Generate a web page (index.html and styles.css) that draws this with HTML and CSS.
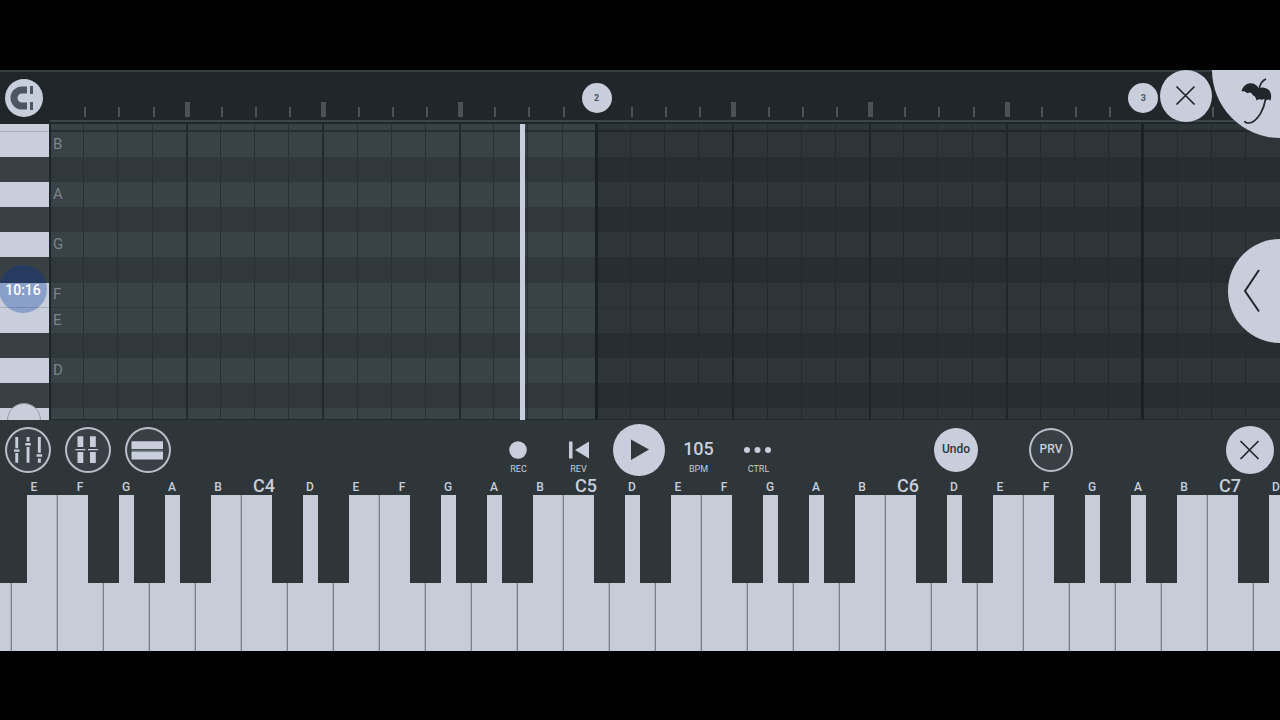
FILE: index.html
```html
<!DOCTYPE html>
<html lang="en">
<head>
    <meta charset="UTF-8">
    <meta name="viewport" content="width=device-width, initial-scale=1.0">
    <title>Piano Roll</title>
    <link rel="stylesheet" href="styles.css">
</head>
<body>
    <main class="app">
        <header class="ruler">
            <div class="ruler-side">
                <button class="magnet" aria-label="Snap">
                    <svg width="38" height="38" viewBox="0 0 38 38">
                        <path d="M22 11H17a8 8 0 0 0 0 16H22" fill="none" stroke="#4c5562" stroke-width="7"/>
                        <path d="M25 7h3v8h-3zM25 23h3v8h-3z" fill="#4c5562"/>
                    </svg>
                </button>
            </div>
            <div class="ticks" id="ticks"></div>
        </header>

        <section class="roll">
            <div class="note-rows" id="side-keys">
                <span class="side-handle"></span>
            </div>
            <div class="notes">
                <div class="note-rows" id="rows"></div>
                <div class="steps" id="steps"></div>
                <div class="playhead"></div>
            </div>
            <div class="clock">10:16</div>
        </section>

        <nav class="controls">
            <div class="group">
                <button class="ring" aria-label="Mixer">
                    <svg width="46" height="46" viewBox="0 0 46 46" fill="#c8cedb">
                        <path d="M10.300 10h2.900v11.300h-2.900zM10.300 26h2.900v9.800h-2.900zM9 22.500h5.500v2.200h-5.500z"/>
                        <path d="M21.600 10h2.900v4.500h-2.900zM21.600 20h2.900v15.800h-2.900zM20.300 16h5.500v2.400h-5.500z"/>
                        <path d="M32.900 10h2.900v15.800h-2.900zM32.900 31.500h2.900v4.300h-2.900zM31.600 27.300h5.500v2.400h-5.500z"/>
                    </svg>
                </button>
                <button class="ring" aria-label="Split view">
                    <svg width="46" height="46" viewBox="0 0 46 46" fill="#c8cedb">
                        <path d="M12.500 9.300h5.800v10.700h-5.800zM12.500 25h5.800v11h-5.800zM25 9.300h5.800v10.700h-5.800zM25 25h5.800v11h-5.800z"/>
                        <path d="M10.300 22h10v1.200h-10zM23 22h10v1.200h-10z"/>
                    </svg>
                </button>
                <button class="ring" aria-label="Stacked view">
                    <svg width="46" height="46" viewBox="0 0 46 46" fill="#c8cedb">
                        <path d="M6.500 14.300h31.500v7.700h-31.500zM6.500 24.500h31.500v8h-31.500z"/>
                        <path d="M6.500 22.800h31.500v.8h-31.500z" fill="#7f8790"/>
                    </svg>
                </button>
            </div>

            <div class="transport">
                <button class="tool">
                    <svg width="30" height="26" viewBox="0 0 30 26"><circle cx="14" cy="13" r="8.800"/></svg>
                    <span>REC</span>
                </button>
                <button class="tool">
                    <svg width="30" height="26" viewBox="0 0 30 26"><path d="M5 4.500h3.500v17H5zM25 4.500v17L11 13z"/></svg>
                    <span>REV</span>
                </button>
                <button class="play" aria-label="Play">
                    <svg width="52" height="52" viewBox="0 0 52 52"><path d="M18 15.500v20.500L36 25.500z" fill="#30383c"/></svg>
                </button>
                <button class="tool">
                    <b>105</b>
                    <span>BPM</span>
                </button>
                <button class="tool">
                    <svg width="30" height="26" viewBox="0 0 30 26"><circle cx="3" cy="13" r="3"/><circle cx="13.500" cy="13" r="3"/><circle cx="24" cy="13" r="3"/></svg>
                    <span>CTRL</span>
                </button>
            </div>

            <div class="group group-right">
                <button class="undo">Undo</button>
                <button class="preview">PRV</button>
                <button class="close-keys" aria-label="Close keyboard">
                    <svg width="48" height="48" viewBox="0 0 48 48"><path d="M14.500 15l18 18M32.500 15l-18 18" stroke="#20262b" stroke-width="1.700"/></svg>
                </button>
            </div>
        </nav>

        <section class="piano" id="piano"></section>

        <button class="close-roll" aria-label="Close editor">
            <svg width="52" height="52" viewBox="0 0 52 52"><path d="M16.500 16.500l18 18M34.500 16.500l-18 18" stroke="#20262b" stroke-width="1.700"/></svg>
        </button>
        <button class="corner" aria-label="Instrument">
            <svg width="68" height="68" viewBox="0 0 68 68">
                <path d="M29.500 21.300C30.500 17 34 13.500 38 13.300C42 13.200 45 15 46.500 18C50 16.800 54.500 17.500 57 20C59.500 23 59.800 27 58.300 31C57.500 29.500 56 29 54.500 30.500C53.500 28.800 51.500 28.500 50 30C48.500 28.800 46.500 29 44.500 30.500C44 27.500 42.500 25.500 40.500 25C39.500 22.500 37.500 22 35.500 23.300C34 21.500 31.500 21 29.500 21.300z" fill="#20262b"/>
                <path d="M54 9C50.500 10.500 48 14 47 19M53.500 29C52 39 47 48 41 51.700C37.500 53.500 33.500 53.500 32.500 51.200" fill="none" stroke="#20262b" stroke-width="1.700"/>
            </svg>
        </button>
        <button class="drawer" aria-label="Open panel">
            <svg width="52" height="104" viewBox="0 0 52 104"><path d="M31 31L17 52l14 20.500" fill="none" stroke="#20262b" stroke-width="2"/></svg>
        </button>
    </main>
    <script src="script.js"></script>
</body>
</html>
```
FILE: styles.css
```css
* {
    margin: 0;
    padding: 0;
    box-sizing: border-box;
    font-family: Roboto, 'Liberation Sans', sans-serif;
}

body {
    background: #000;
    min-height: 100vh;
    padding-top: 70px;
    overflow-x: hidden;
}

button {
    border: none;
    background: none;
    color: #c8cedb;
    cursor: pointer;
}

svg {
    display: block;
}

.app {
    position: relative;
    background: #2e363a;
    overflow: hidden;
}

/* Timeline ruler */
.ruler {
    display: flex;
    height: 54px;
    background: #1f272b;
    border-top: 2px solid #363e42;
}

.ruler-side {
    width: 50px;
    padding: 7px 5px;
}

.magnet {
    width: 38px;
    height: 38px;
    border-radius: 50%;
    background: #c8cedb;
}

.ticks {
    flex: 1;
    display: grid;
    grid-template-columns: repeat(36, 1fr);
    align-items: end;
    height: 50px;
    padding-bottom: 3px;
    border-bottom: 2px solid #3c4549;
}

.tick {
    position: relative;
    height: 10px;
}

.tick::before {
    content: '';
    display: block;
    width: 2px;
    height: 10px;
    background: #4a5255;
}

.tick.beat {
    height: 15px;
}

.tick.beat::before {
    width: 5px;
    height: 15px;
    margin-left: -2px;
}

.tick.bar::before {
    display: none;
}

.bar-number {
    position: absolute;
    left: -15px;
    bottom: 4px;
    width: 30px;
    height: 30px;
    border-radius: 50%;
    background: #c8cedb;
    color: #4c5562;
    font-size: 9px;
    font-weight: 700;
    line-height: 30px;
    text-align: center;
}

/* Note grid */
.roll {
    position: relative;
    display: flex;
    height: 296px;
    background: #394246;
}

.note-rows {
    display: grid;
    grid-template-rows: 8px repeat(11, 1fr) 12px;
    height: 100%;
}

#side-keys {
    position: relative;
    width: 50px;
    border-right: 1px solid #20282c;
    overflow: hidden;
}

.side-key {
    background: #c8cedb;
}

.side-key.black {
    background: #384044;
}

.side-key.split {
    border-bottom: 1px solid #a9afba;
}

.side-handle {
    position: absolute;
    left: 7px;
    bottom: -17px;
    width: 34px;
    height: 34px;
    border: 1px solid #9299a2;
    border-radius: 50%;
    background: #c8cedb;
}

.notes {
    position: relative;
    flex: 1;
}

.row {
    display: flex;
    align-items: center;
    padding-left: 3px;
    padding-bottom: 1px;
    background: #394246;
    color: #7c8486;
    font-size: 15px;
    line-height: 20px;
}

.row.black {
    background: #31383b;
}

.row.split {
    border-bottom: 1px solid #323a3e;
}

.row.octave {
    border-bottom: 2px solid #272f33;
}

.steps {
    position: absolute;
    inset: 0;
    display: grid;
    grid-template-columns: repeat(36, 1fr);
    border-bottom: 1px solid #22292d;
}

.step {
    margin-left: -1px;
    border-left: 1px solid #283034;
}

.step.beat {
    border-left: 2px solid #232a2e;
}

.step.bar:first-child {
    margin-left: 0;
    border-left: 1px solid #1c2327;
}

.step.outside {
    margin-left: 0;
    background: rgba(13, 18, 22, 0.27);
    box-shadow: -1px 0 #232a2e;
    border-left: none;
}

.step.outside.beat {
    box-shadow: -1px 0 #1c2428, inset 1px 0 #20282c;
}

.step.outside.bar {
    box-shadow: -2px 0 #1a2125, inset 1px 0 #1a2125;
}

.playhead {
    position: absolute;
    top: 0;
    bottom: 0;
    left: 38.2%;
    width: 5px;
    background: #c8cedb;
}

.clock {
    position: absolute;
    left: -1px;
    top: 141px;
    width: 48px;
    height: 48px;
    border-radius: 50%;
    background: rgba(0, 50, 165, 0.3);
    color: #fff;
    font-size: 14px;
    font-weight: 500;
    line-height: 50px;
    text-align: center;
}

/* Control bar */
.controls {
    display: grid;
    grid-template-columns: 1fr auto 1fr;
    align-items: center;
    height: 60px;
    padding: 0 6px 0 5px;
}

.group {
    display: flex;
    align-items: center;
    gap: 14px;
}

.ring,
.preview {
    width: 46px;
    height: 46px;
    border-radius: 50%;
    background: #384045;
    box-shadow: inset 0 0 0 2px #b9bfc9;
}

.transport {
    display: flex;
    align-items: center;
    margin-right: 2px;
}

.tool {
    display: flex;
    flex-direction: column;
    align-items: center;
    width: 60px;
    padding-top: 12px;
    fill: #c8cedb;
}

.tool b {
    height: 26px;
    font-size: 18px;
    font-weight: 500;
    line-height: 24px;
}

.tool span {
    font-size: 9px;
    line-height: 12px;
}

.play {
    width: 52px;
    height: 52px;
    margin: 0 4px;
    border-radius: 50%;
    background: #c8cedb;
}

.group-right {
    justify-content: flex-end;
    gap: 51px;
}

.undo,
.preview {
    width: 44px;
    height: 44px;
    border-radius: 50%;
    padding-bottom: 2px;
    font-size: 12px;
    font-weight: 500;
}

.undo {
    background: #c8cedb;
    color: #30383c;
}

.close-keys {
    width: 48px;
    height: 48px;
    margin-left: 102px;
    border-radius: 50%;
    background: #c8cedb;
}

/* Keyboard */
.piano {
    display: flex;
    margin-top: -5px;
    margin-left: -35px;
    overflow: hidden;
}

.key {
    position: relative;
    flex: 0 0 46px;
}

.key-label {
    display: block;
    height: 20px;
    color: #c8cedb;
    font-size: 12px;
    font-weight: 500;
    line-height: 24px;
    text-align: center;
}

.key-label.octave {
    font-size: 18px;
    line-height: 21px;
}

.white-key {
    display: block;
    width: 46px;
    height: 156px;
    background: #c6cdd9;
    border-left: 1px solid #79808a;
    border-right: 1px solid #adb3be;
}

.black-key {
    position: absolute;
    z-index: 1;
    top: 20px;
    right: -16px;
    width: 31px;
    height: 88px;
    background: #2e363a;
}

/* Floating buttons */
.close-roll {
    position: absolute;
    top: 0;
    right: 68px;
    width: 52px;
    height: 52px;
    border-radius: 50%;
    background: #c8cedb;
}

.corner {
    position: absolute;
    top: 0;
    right: 0;
    width: 68px;
    height: 68px;
    border-bottom-left-radius: 68px;
    background: #c8cedb;
}

.drawer {
    position: absolute;
    top: 169px;
    right: 0;
    width: 52px;
    height: 104px;
    border-radius: 52px 0 0 52px;
    background: #c8cedb;
}
```
FILE: script.js
```javascript
const STEPS = 36;
const PATTERN_STEPS = 16;
const KEY_WIDTH = 46;

const ticks = document.getElementById('ticks');
const steps = document.getElementById('steps');
const rows = document.getElementById('rows');
const sideKeys = document.getElementById('side-keys');
const piano = document.getElementById('piano');

function add(parent, tag, className, text) {
    const el = document.createElement(tag);
    el.className = className;
    el.textContent = text || '';
    parent.appendChild(el);
    return el;
}

// Ruler and step lines
for (let i = 0; i < STEPS; i++) {
    let type = '';
    if (i % 4 === 0) type = ' beat';
    if (i % 16 === 0) type = ' bar';

    const tick = add(ticks, 'div', 'tick' + type);
    if (i > 0 && i % 16 === 0) {
        add(tick, 'span', 'bar-number', String(i / 16 + 1));
    }
    add(steps, 'div', 'step' + type + (i >= PATTERN_STEPS ? ' outside' : ''));
}

// Note rows, top to bottom
const notes = ['C', 'B', 'A#', 'A', 'G#', 'G', 'F#', 'F', 'E', 'D#', 'D', 'C#', 'C'];
const handle = sideKeys.firstElementChild;

notes.forEach((note, index) => {
    let type = '';
    if (note.includes('#')) type = ' black';
    if (note === 'F') type = ' split';
    if (index === 0) type = ' split octave';

    const showName = !note.includes('#') && note !== 'C';
    add(rows, 'div', 'row' + type, showName ? note : '');
    add(sideKeys, 'div', 'side-key' + type);
});
sideKeys.appendChild(handle);

// Keyboard starts on D3, as many keys as fit the window
const whiteNotes = ['C', 'D', 'E', 'F', 'G', 'A', 'B'];
const keyCount = Math.ceil((window.innerWidth + 35) / KEY_WIDTH);

for (let i = 1; i <= keyCount; i++) {
    const note = whiteNotes[i % 7];
    const octave = 3 + Math.floor(i / 7);
    const name = note + octave;

    // the first key is mostly off screen, so it gets no label
    let label = note === 'C' ? name : note;
    if (i === 1) label = '';

    const key = add(piano, 'div', 'key');
    add(key, 'span', note === 'C' ? 'key-label octave' : 'key-label', label);
    add(key, 'button', 'white-key').setAttribute('aria-label', name);
    if (note !== 'E' && note !== 'B') {
        add(key, 'button', 'black-key').setAttribute('aria-label', note + '#' + octave);
    }
}
```
